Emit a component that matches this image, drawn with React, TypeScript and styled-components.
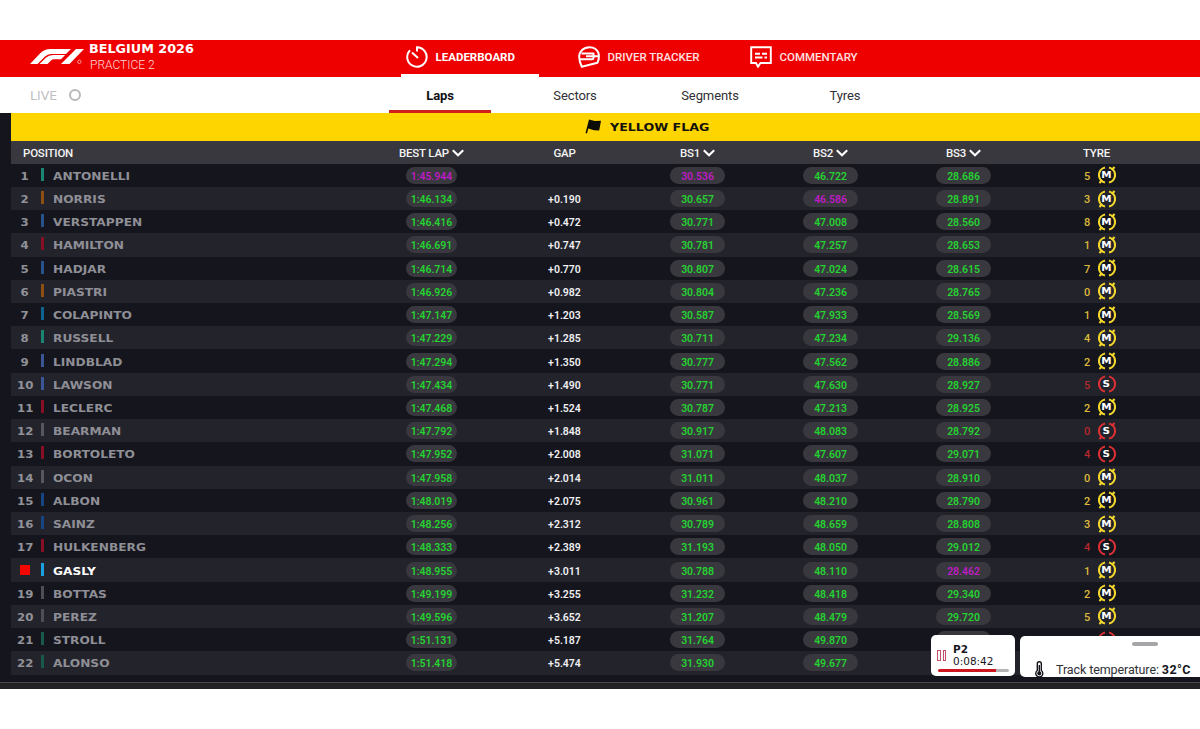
import React from 'react'
import styled, { createGlobalStyle, css } from 'styled-components'

type Driver = {
  name: string
  team: string
  lap: string
  gap: string
  sectors: string[]
  laps?: number
  tyre?: 'M' | 'S'
  used: boolean
}

const d = (
  name: string,
  team: string,
  lap: string,
  gap: string,
  sectors: string,
  laps?: number,
  tyre: 'M' | 'S' = 'M',
  used = true,
): Driver => ({ name, team, lap, gap, sectors: sectors.split(' '), laps, tyre, used })

const drivers: Driver[] = [
  d('ANTONELLI', '#1a8572', '1:45.944', '', '30.536 46.722 28.686', 5),
  d('NORRIS', '#8f4e12', '1:46.134', '+0.190', '30.657 46.586 28.891', 3),
  d('VERSTAPPEN', '#28508a', '1:46.416', '+0.472', '30.771 47.008 28.560', 8),
  d('HAMILTON', '#860f26', '1:46.691', '+0.747', '30.781 47.257 28.653', 1),
  d('HADJAR', '#28508a', '1:46.714', '+0.770', '30.807 47.024 28.615', 7),
  d('PIASTRI', '#8f4e12', '1:46.926', '+0.982', '30.804 47.236 28.765', 0),
  d('COLAPINTO', '#0d6390', '1:47.147', '+1.203', '30.587 47.933 28.569', 1),
  d('RUSSELL', '#1a8572', '1:47.229', '+1.285', '30.711 47.234 29.136', 4),
  d('LINDBLAD', '#3c5594', '1:47.294', '+1.350', '30.777 47.562 28.886', 2),
  d('LAWSON', '#3c5594', '1:47.434', '+1.490', '30.771 47.630 28.927', 5, 'S', false),
  d('LECLERC', '#860f26', '1:47.468', '+1.524', '30.787 47.213 28.925', 2),
  d('BEARMAN', '#55585c', '1:47.792', '+1.848', '30.917 48.083 28.792', 0, 'S'),
  d('BORTOLETO', '#860f26', '1:47.952', '+2.008', '31.071 47.607 29.071', 4, 'S', false),
  d('OCON', '#55585c', '1:47.958', '+2.014', '31.011 48.037 28.910', 0),
  d('ALBON', '#174482', '1:48.019', '+2.075', '30.961 48.210 28.790', 2),
  d('SAINZ', '#174482', '1:48.256', '+2.312', '30.789 48.659 28.808', 3),
  d('HULKENBERG', '#860f26', '1:48.333', '+2.389', '31.193 48.050 29.012', 4, 'S', false),
  d('GASLY', '#1ba0e0', '1:48.955', '+3.011', '30.788 48.110 28.462', 1),
  d('BOTTAS', '#4d4f55', '1:49.199', '+3.255', '31.232 48.418 29.340', 2),
  d('PEREZ', '#4d4f55', '1:49.596', '+3.652', '31.207 48.479 29.720', 5),
  d('STROLL', '#175a4a', '1:51.131', '+5.187', '31.764 49.870 ', undefined, 'S', false),
  d('ALONSO', '#175a4a', '1:51.418', '+5.474', '31.930 49.677 ', undefined, 'S', false),
]

// overall session bests are shown in purple
const sessionBests = ['1:45.944', '30.536', '46.586', '28.462']
const inPit = 'GASLY'

const columns = [
  { label: 'BEST LAP', sortable: true },
  { label: 'GAP', sortable: false },
  { label: 'BS1', sortable: true },
  { label: 'BS2', sortable: true },
  { label: 'BS3', sortable: true },
  { label: 'TYRE', sortable: false },
]

const Logo = () => (
  <svg width="54" height="16" viewBox="0 0 54 16" fill="#fff">
    <path d="M0 15 L9.500 5 Q14 0 20.500 0 H41 L36 5 H21 Q17.500 5 15 7.500 L7.500 15Z" />
    <path d="M9.500 15 L15.800 8.800 Q18.800 5.900 23 5.900 H35.200 L31 10.200 H24 Q22.300 10.200 21 11.500 L17.500 15Z" />
    <path d="M31 15 L46 0 H54 L39.500 15Z" />
    <circle cx="49.300" cy="12.800" r="1.700" fill="none" stroke="#ffd0d0" strokeWidth="0.700" />
  </svg>
)

const TimerIcon = () => (
  <svg width="22" height="22" viewBox="0 0 22 22" fill="none" stroke="#fff" strokeWidth="2">
    <path d="M11 5.500 V1.300 A9.700 9.700 0 1 1 4 4.200" />
    <path d="M6 6.600 L12 12" />
  </svg>
)

const HelmetIcon = () => (
  <svg width="22" height="22" viewBox="0 0 22 22" fill="none" stroke="#fff" strokeWidth="2" strokeLinejoin="round">
    <path d="M20.500 7.200 C19 3 15.500 1.200 11.500 1.200 C5.500 1.200 1.200 5.500 1.200 11 C1.200 14.800 2.200 17.500 3.800 20.700 L19.500 16.800 C21 13.500 21.300 10.500 20.500 7.200Z" />
    <path d="M3.500 7.500 H15.500 V10.300 H20.500 M1.500 13.300 H14 Q15.500 13.300 15.500 12 V10.300 H8" />
  </svg>
)

const CommentIcon = () => (
  <svg width="22" height="22" viewBox="0 0 22 22" fill="none" stroke="#fff" strokeWidth="1.900">
    <path d="M1.200 1.200 H20.800 V17 H10.500 L8 20.700 L6 17 H1.200Z" />
    <path d="M5 7.800 H10 M12 7.800 H17 M5 11.500 H12.500 M14.500 11.500 H17" />
  </svg>
)

const FlagIcon = () => (
  <svg width="17" height="15" viewBox="0 0 17 15">
    <path d="M4 0.500 L10 2 L16 1.800 L14.200 11.500 L9 11.200 L3.300 9.500 L2 14.500 L0.500 14Z" fill="#0c0c06" />
  </svg>
)

const Chevron = () => (
  <svg width="12" height="8" viewBox="0 0 12 8" fill="none" stroke="#fff" strokeWidth="2.100">
    <path d="M0.800 1.200 L6 6.200 L11.200 1.200" />
  </svg>
)

const Tyre = ({ type, used, label }: { type?: 'M' | 'S'; used: boolean; label: boolean }) => {
  const color = type === 'M' ? '#f3d72c' : '#dc3034'
  return (
    <TyreIcon>
      <svg width="18" height="18" viewBox="0 0 18 18" fill="none" stroke={color} strokeWidth="2.100">
        <path d="M7 1.400 A7.800 7.800 0 0 0 7 16.600" />
        <path d="M11 1.400 A7.800 7.800 0 0 1 11 16.600" />
        {used && <path d="M13.600 4 L16.600 1 M4.400 14 L1.400 17" />}
      </svg>
      {label && <Compound>{type}</Compound>}
    </TyreIcon>
  )
}

const App: React.FC = () => {
  return (
    <>
      <GlobalStyle />
      <Screen>
        <Header>
          <Event>
            <Logo />
            <EventText>
              <EventName>BELGIUM 2026</EventName>
              <Session>PRACTICE 2</Session>
            </EventText>
          </Event>
          <NavItem $active>
            <TimerIcon />
            <NavLabel $active>LEADERBOARD</NavLabel>
          </NavItem>
          <NavItem>
            <HelmetIcon />
            <NavLabel>DRIVER TRACKER</NavLabel>
          </NavItem>
          <NavItem>
            <CommentIcon />
            <NavLabel>COMMENTARY</NavLabel>
          </NavItem>
        </Header>
        <Tabs>
          <Live>
            LIVE
            <LiveDot />
          </Live>
          {['Laps', 'Sectors', 'Segments', 'Tyres'].map((tab, index) => (
            <Tab key={tab} $active={index === 0}>
              {tab}
            </Tab>
          ))}
        </Tabs>
        <Board>
          <FlagBar>
            <FlagIcon />
            <FlagText>YELLOW FLAG</FlagText>
          </FlagBar>
          <TableHead>
            <HeadPosition>POSITION</HeadPosition>
            {columns.map((column) => (
              <HeadCell key={column.label}>
                {column.label}
                {column.sortable && <Chevron />}
              </HeadCell>
            ))}
          </TableHead>
          {drivers.map((driver, index) => (
            <Row key={driver.name} $even={index % 2 === 1}>
              <DriverCell>
                <Position>
                  {driver.name === inPit ? <PitMark /> : <PositionNumber>{index + 1}</PositionNumber>}
                </Position>
                <TeamBar $color={driver.team} />
                <DriverName $active={driver.name === inPit}>{driver.name}</DriverName>
              </DriverCell>
              <Cell>
                <Pill $width={51} $purple={sessionBests.includes(driver.lap)}>
                  {driver.lap}
                </Pill>
              </Cell>
              <Cell>
                <Gap>{driver.gap}</Gap>
              </Cell>
              {driver.sectors.map((sector, i) => (
                <Cell key={i}>
                  <Pill $width={55} $purple={sessionBests.includes(sector)}>
                    {sector}
                  </Pill>
                </Cell>
              ))}
              <TyreCell>
                <LapCount $type={driver.tyre}>{driver.laps}</LapCount>
                <Tyre type={driver.tyre} used={driver.used} label={driver.laps !== undefined} />
              </TyreCell>
            </Row>
          ))}
        </Board>
        <BottomBar />
        <ClockCard>
          <PauseBars>
            <i />
            <i />
          </PauseBars>
          <ClockText>
            <b>P2</b>
            <span>0:08:42</span>
          </ClockText>
          <Progress />
        </ClockCard>
        <WeatherCard>
          <Handle />
          <Weather>
            <svg width="11" height="17" viewBox="0 0 11 17" fill="none" stroke="#15151c" strokeWidth="1.400">
              <path d="M3.300 9.500 V2.800 a2 2 0 0 1 4 0 V9.500 a3.500 3.500 0 1 1 -4 0Z" />
              <path d="M5.300 4 V11" />
              <circle cx="5.300" cy="12.300" r="1.400" fill="#15151c" />
            </svg>
            <WeatherText>
              Track temperature: <b>32°C</b>
            </WeatherText>
          </Weather>
        </WeatherCard>
      </Screen>
    </>
  )
}

export default App

const GlobalStyle = createGlobalStyle`
  * {
    box-sizing: border-box;
  }
  body {
    margin: 0;
    background: #fff;
    font-family: Roboto, 'Open Sans', sans-serif;
  }
  svg {
    display: block;
    flex: none;
  }
`

const wide = `'DejaVu Sans', Inter, sans-serif`

// extended display face for names and titles
const display = css`
  font-family: ${wide};
  font-weight: bold;
  transform: scaleX(1.12);
  transform-origin: left center;
`

const Screen = styled.div`
  position: relative;
  width: 1200px;
  height: 729px;
  padding-top: 40px;
  overflow: hidden;
`

const Header = styled.header`
  display: flex;
  height: 37px;
  background: #ee0000;
`

const Event = styled.div`
  display: flex;
  width: 401px;
  padding: 2px 0 0 30px;
  align-items: flex-start;
  & > svg {
    margin-top: 7px;
  }
`

const EventText = styled.div`
  margin-left: 5px;
  color: #fff;
  white-space: nowrap;
`

const EventName = styled.div`
  ${display}
  font-size: 11.4px;
  line-height: 14px;
`

const Session = styled.div`
  margin-top: 2px;
  padding-left: 1px;
  color: #ffd9d9;
  font-size: 12px;
  font-weight: 300;
  line-height: 15px;
`

const NavItem = styled.div<{ $active?: boolean }>`
  display: flex;
  width: 138px;
  margin-right: 34px;
  padding-left: 5px;
  align-items: center;
  border-bottom: 3px solid ${({ $active }) => ($active ? '#fff' : 'transparent')};
`

const NavLabel = styled.span<{ $active?: boolean }>`
  margin-left: 7.5px;
  color: ${({ $active }) => ($active ? '#fff' : '#ffe0e0')};
  font-size: 11.5px;
  font-weight: ${({ $active }) => ($active ? 700 : 500)};
  white-space: nowrap;
`

const Tabs = styled.nav`
  display: flex;
  height: 36px;
  gap: 33px;
  background: #fff;
`

const Live = styled.div`
  display: flex;
  width: 356px;
  padding: 1px 0 0 30px;
  align-items: center;
  color: #c0c0c2;
  font: 12.5px ${wide};
`

const LiveDot = styled.span`
  width: 12px;
  height: 12px;
  margin: -2px 0 0 12px;
  border: 2.5px solid #b9b9bb;
  border-radius: 50%;
`

const Tab = styled.div<{ $active: boolean }>`
  width: 102px;
  padding-top: 2px;
  border-bottom: 3px solid ${({ $active }) => ($active ? '#d0201c' : 'transparent')};
  color: ${({ $active }) => ($active ? '#101014' : '#303036')};
  font-size: 13px;
  font-weight: ${({ $active }) => ($active ? 700 : 400)};
  letter-spacing: -0.1px;
  line-height: 34px;
  text-align: center;
`

const Board = styled.main`
  height: 569px;
  padding-left: 10.5px;
  background: #15151d;
`

const FlagBar = styled.div`
  display: flex;
  height: 27.5px;
  padding-left: 574px;
  gap: 8px;
  align-items: center;
  background: #ffd500;
`

const FlagText = styled.span`
  ${display}
  padding-top: 2px;
  color: #14120a;
  font-size: 11.3px;
`

const TableHead = styled.div`
  display: grid;
  grid-template-columns: 354.5px repeat(6, 133px);
  height: 23.2px;
  padding-top: 1px;
  align-items: center;
  background: #38383e;
  color: #f4f4f5;
  font-size: 11.5px;
  font-weight: 500;
  letter-spacing: -0.2px;
`

const HeadPosition = styled.div`
  padding-left: 12.5px;
`

const HeadCell = styled.div`
  display: flex;
  gap: 3px;
  align-items: center;
  justify-content: center;
`

const Row = styled.div<{ $even: boolean }>`
  display: grid;
  grid-template-columns: 354.5px repeat(6, 133px);
  height: 23.22px;
  align-items: center;
  background: ${({ $even }) => ($even ? '#23232c' : '#15151d')};
`

const DriverCell = styled.div`
  display: flex;
  align-items: center;
`

const Position = styled.div`
  display: flex;
  width: 29px;
  justify-content: center;
`

const PositionNumber = styled.span`
  ${display}
  padding-top: 1px;
  color: #919198;
  font-size: 10.5px;
  transform-origin: center;
`

const PitMark = styled.span`
  width: 10px;
  height: 10px;
  background: #f50500;
`

const TeamBar = styled.span<{ $color: string }>`
  width: 3px;
  height: 13px;
  margin: -2px 8.5px 0 1.5px;
  background: ${({ $color }) => $color};
`

const DriverName = styled.span<{ $active: boolean }>`
  ${display}
  padding-top: 2px;
  color: ${({ $active }) => ($active ? '#fff' : '#8f8f96')};
  font-size: 10.9px;
`

const Cell = styled.div`
  display: flex;
  justify-content: center;
`

const Pill = styled.span<{ $width: number; $purple: boolean }>`
  width: ${({ $width }) => $width}px;
  height: 17px;
  border-radius: 9px;
  background: #38383e;
  color: ${({ $purple }) => ($purple ? '#bd1cc2' : '#26d232')};
  font-size: 10.5px;
  font-weight: 600;
  letter-spacing: -0.05px;
  line-height: 19px;
  text-align: center;
`

const Gap = styled.span`
  padding-top: 2px;
  color: #f0f0f2;
  font-size: 10.5px;
  font-weight: 600;
`

const TyreCell = styled.div`
  display: flex;
  padding-left: 54px;
  align-items: center;
`

const LapCount = styled.span<{ $type?: 'M' | 'S' }>`
  width: 13.5px;
  padding-top: 2px;
  color: ${({ $type }) => ($type === 'M' ? '#dcb93a' : '#b8282c')};
  font-size: 11px;
  font-weight: 500;
`

const TyreIcon = styled.div`
  display: grid;
  place-items: center;
  & > * {
    grid-area: 1 / 1;
  }
`

const Compound = styled.span`
  color: #fff;
  font: bold 9px/10px ${wide};
  transform: scaleX(1.15);
`

const BottomBar = styled.div`
  height: 6.5px;
  border-top: 1.5px solid #48484a;
  background: #232325;
`

const ClockCard = styled.div`
  position: absolute;
  left: 931px;
  top: 635px;
  display: grid;
  grid-template-columns: 22px 1fr;
  grid-template-rows: 34px 3px;
  width: 84px;
  height: 41px;
  border-radius: 5px;
  background: #fff;
`

const PauseBars = styled.div`
  display: flex;
  padding: 7px 0 0 6px;
  gap: 2px;
  align-items: center;
  & > i {
    width: 3.5px;
    height: 11px;
    border: 1px solid #c4506a;
  }
`

const ClockText = styled.div`
  display: flex;
  padding-top: 8px;
  flex-direction: column;
  color: #17171d;
  font: 10.5px/12px ${wide};
`

const Progress = styled.div`
  grid-column: 1 / 3;
  margin: 0 6px 0 7px;
  border-radius: 2px;
  background: linear-gradient(90deg, #cc1620 81%, #b4b4b6 81%);
`

const WeatherCard = styled.div`
  position: absolute;
  left: 1020px;
  top: 636px;
  width: 180px;
  height: 41px;
  padding-top: 6px;
  overflow: hidden;
  border-radius: 5px 0 0 5px;
  background: #fff;
`

const Handle = styled.div`
  width: 26px;
  height: 4px;
  margin-left: 112px;
  border-radius: 2px;
  background: #a6a6a8;
`

const Weather = styled.div`
  display: flex;
  margin-top: 15px;
  padding-left: 14px;
  gap: 11px;
`

const WeatherText = styled.span`
  padding-top: 1px;
  color: #303036;
  font-size: 12.5px;
  letter-spacing: -0.1px;
  line-height: 16px;
  white-space: nowrap;
  & > b {
    color: #15151c;
    letter-spacing: 0.4px;
  }
`
